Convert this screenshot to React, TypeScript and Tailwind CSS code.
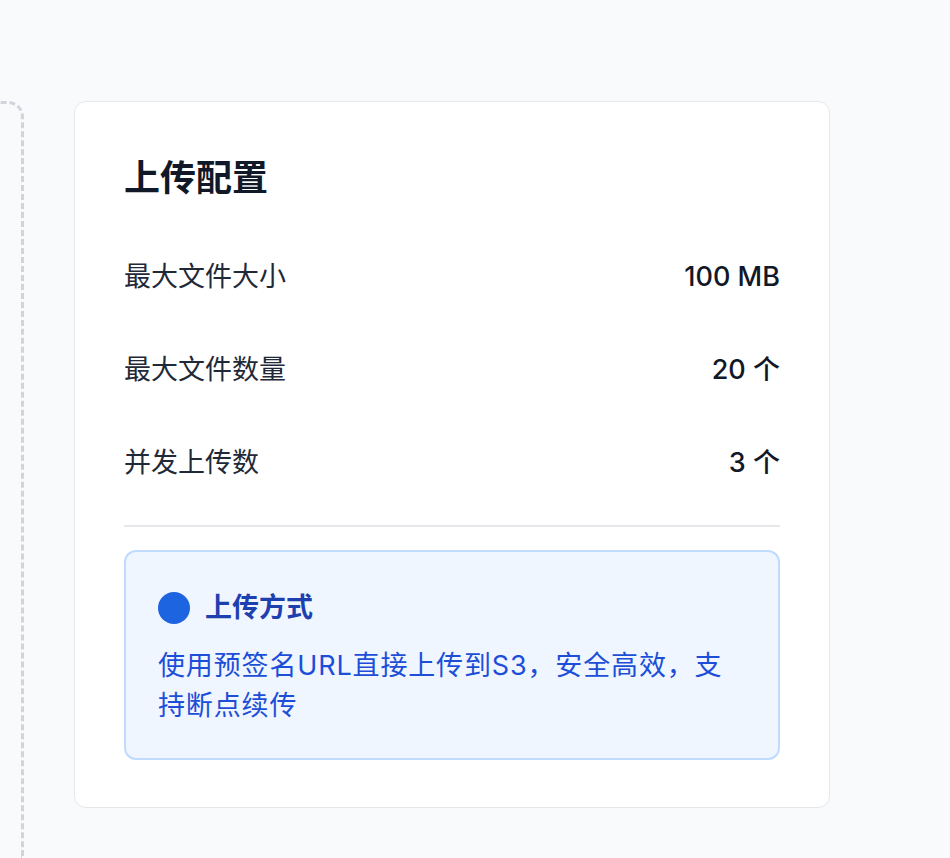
export default function App() {
  const rows = [
    { label: "最大文件大小", value: "100 MB" },
    { label: "最大文件数量", value: "20 个" },
    { label: "并发上传数", value: "3 个" },
  ];

  return (
    <div
      className="min-h-[858px] bg-[#f9fafb] overflow-hidden"
      style={{ fontFamily: 'Inter, "Noto Sans CJK SC", sans-serif' }}
    >
      <div className="flex items-start gap-[50px] pt-[101px]">
        {/* dropzone, mostly off-screen to the left */}
        <div className="w-[300px] -ml-[276px] h-[757px] shrink-0 rounded-t-[16px] border-[3px] border-b-0 border-dashed border-[#d1d5db]" />

        <div className="w-[756px] shrink-0 bg-white border border-[#e5e7eb] rounded-[12px] px-[49px] pt-[52px] pb-[47px]">
          <h2 className="text-[36px] leading-[48px] font-bold text-[#111827] mb-[54px]">上传配置</h2>

          <div className="flex flex-col gap-[52px]">
            {rows.map((r) => (
              <div key={r.label} className="flex justify-between items-center text-[27px] leading-[41px]">
                <span className="text-[#1f2937]">{r.label}</span>
                <span className="font-medium text-[#111827]">{r.value}</span>
              </div>
            ))}
          </div>

          <div className="mt-[42px] pt-[23px] border-t-2 border-[#e5e7eb]">
            <div className="bg-[#eff6ff] border-2 border-[#bfdbfe] rounded-[12px] px-[32px] pt-[36px] pb-[32px]">
              <div className="flex items-center gap-[15px] mb-[18px]">
                <span className="w-[32px] h-[32px] rounded-full bg-[#1d64e0] shrink-0" />
                <span className="text-[27px] leading-[40px] font-bold text-[#1e40af]">上传方式</span>
              </div>
              <p className="text-[27px] leading-[40px] tracking-[0.85px] text-[#1d4ed8]">
                使用预签名URL直接上传到S3，安全高效，支持断点续传
              </p>
            </div>
          </div>
        </div>
      </div>
    </div>
  );
}
